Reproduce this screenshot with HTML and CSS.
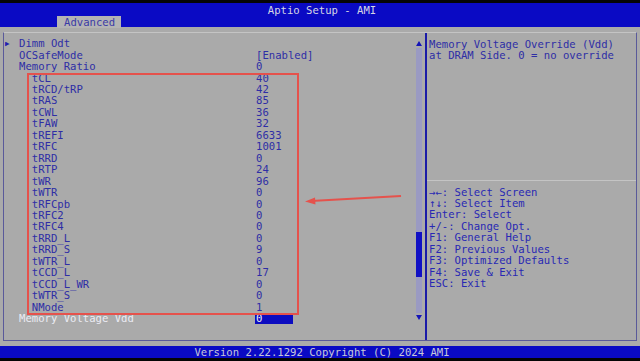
FILE: index.html
```html
<!DOCTYPE html>
<html>
<head>
<meta charset="utf-8">
<link rel="stylesheet" href="styles.css">
</head>
<body>
<div class="screen">
  <div class="blackbar"></div>
  <header class="header">
    <div class="title">Aptio Setup - AMI</div>
    <div class="tabs"><span class="tab">Advanced</span></div>
  </header>
  <main class="frame">
    <section class="left">
      <div class="list">
        <div class="row"><span class="arrow">&#9654;</span><span class="label">Dimm Odt</span><span class="value"></span></div>
        <div class="row"><span class="arrow"></span><span class="label">OCSafeMode</span><span class="value">[Enabled]</span></div>
        <div class="row"><span class="arrow"></span><span class="label">Memory Ratio</span><span class="value">0</span></div>
        <div class="row sub"><span class="arrow"></span><span class="label">tCL</span><span class="value">40</span></div>
        <div class="row sub"><span class="arrow"></span><span class="label">tRCD/tRP</span><span class="value">42</span></div>
        <div class="row sub"><span class="arrow"></span><span class="label">tRAS</span><span class="value">85</span></div>
        <div class="row sub"><span class="arrow"></span><span class="label">tCWL</span><span class="value">36</span></div>
        <div class="row sub"><span class="arrow"></span><span class="label">tFAW</span><span class="value">32</span></div>
        <div class="row sub"><span class="arrow"></span><span class="label">tREFI</span><span class="value">6633</span></div>
        <div class="row sub"><span class="arrow"></span><span class="label">tRFC</span><span class="value">1001</span></div>
        <div class="row sub"><span class="arrow"></span><span class="label">tRRD</span><span class="value">0</span></div>
        <div class="row sub"><span class="arrow"></span><span class="label">tRTP</span><span class="value">24</span></div>
        <div class="row sub"><span class="arrow"></span><span class="label">tWR</span><span class="value">96</span></div>
        <div class="row sub"><span class="arrow"></span><span class="label">tWTR</span><span class="value">0</span></div>
        <div class="row sub"><span class="arrow"></span><span class="label">tRFCpb</span><span class="value">0</span></div>
        <div class="row sub"><span class="arrow"></span><span class="label">tRFC2</span><span class="value">0</span></div>
        <div class="row sub"><span class="arrow"></span><span class="label">tRFC4</span><span class="value">0</span></div>
        <div class="row sub"><span class="arrow"></span><span class="label">tRRD_L</span><span class="value">0</span></div>
        <div class="row sub"><span class="arrow"></span><span class="label">tRRD_S</span><span class="value">9</span></div>
        <div class="row sub"><span class="arrow"></span><span class="label">tWTR_L</span><span class="value">0</span></div>
        <div class="row sub"><span class="arrow"></span><span class="label">tCCD_L</span><span class="value">17</span></div>
        <div class="row sub"><span class="arrow"></span><span class="label">tCCD_L_WR</span><span class="value">0</span></div>
        <div class="row sub"><span class="arrow"></span><span class="label">tWTR_S</span><span class="value">0</span></div>
        <div class="row sub"><span class="arrow"></span><span class="label">NMode</span><span class="value">1</span></div>
        <div class="row selected"><span class="arrow"></span><span class="label">Memory Voltage Vdd</span><span class="value"><span class="hl">0</span></span></div>
      </div>
      <div class="scrollbar">
        <span class="sb-arrow up"></span>
        <div class="track"><div class="thumb"></div></div>
        <span class="sb-arrow down"></span>
      </div>
    </section>
    <div class="divider"></div>
    <aside class="right">
      <div class="help">
        <div class="line">Memory Voltage Override (Vdd)</div>
        <div class="line">at DRAM Side. 0 = no override</div>
      </div>
      <div class="sep"></div>
      <div class="keys">
        <div class="line">&#8594;&#8592;: Select Screen</div>
        <div class="line">&#8593;&#8595;: Select Item</div>
        <div class="line">Enter: Select</div>
        <div class="line">+/-: Change Opt.</div>
        <div class="line">F1: General Help</div>
        <div class="line">F2: Previous Values</div>
        <div class="line">F3: Optimized Defaults</div>
        <div class="line">F4: Save &amp; Exit</div>
        <div class="line">ESC: Exit</div>
      </div>
    </aside>
  </main>
  <footer class="footer">Version 2.22.1292 Copyright (C) 2024 AMI</footer>
  <div class="blackbar"></div>

  <div class="annot-box"></div>
  <svg class="annot-arrow" width="104" height="20" viewBox="0 0 104 20">
    <line x1="98" y1="6" x2="8" y2="11" stroke="#e5524c" stroke-width="2"/>
    <polygon points="2,11.5 12,7.5 12.5,14.5" fill="#e5524c"/>
  </svg>
</div>
</body>
</html>
```
FILE: styles.css
```css
html, body {
  margin: 0;
  padding: 0;
  background: #000;
}
.screen {
  position: relative;
  width: 640px;
  height: 361px;
  background: #aaaaaa;
  font-family: "DejaVu Sans Mono", "Liberation Mono", monospace;
  font-size: 10.6px;
  color: #2e2ea6;
  overflow: hidden;
}
.blackbar {
  height: 3px;
  background: #050505;
}
.header {
  height: 24px;
  background: #0a0ac4;
}
.title {
  height: 13px;
  line-height: 15px;
  text-align: center;
  color: #d6d6e4;
  padding-left: 4px;
}
.tabs {
  height: 11px;
  padding-left: 57px;
}
.tab {
  display: inline-block;
  width: 57px;
  height: 12px;
  margin-top: -1px;
  line-height: 12px;
  padding-left: 7px;
  background: #b4b4b4;
  color: #3a3aa6;
}
.frame {
  display: flex;
  margin: 5px 0 0 3px;
  width: 632px;
  height: 307px;
  border: 1px solid #5a5a9a;
  border-top-color: #c4c4c4;
}
.left {
  width: 421px;
  display: flex;
}
.list {
  flex: 1;
  padding-top: 5.2px;
}
.row {
  display: grid;
  grid-template-columns: 15px 237px 1fr;
  height: 11.46px;
  line-height: 11.46px;
  white-space: pre;
}
.arrow {
  font-size: 7.5px;
  padding-left: 1px;
  color: #2020b0;
}
.sub .label {
  padding-left: 12.8px;
}
.selected .label {
  color: #ececf4;
}
.hl {
  display: inline-block;
  width: 38px;
  height: 11px;
  line-height: 11px;
  background: #0c0cc0;
  color: #f0f0f0;
  margin-left: -1px;
  padding-left: 1px;
  box-sizing: border-box;
}
.scrollbar {
  width: 6px;
  margin-right: 3px;
  padding-top: 8px;
  display: flex;
  flex-direction: column;
  align-items: center;
  gap: 2px;
}
.sb-arrow {
  width: 0;
  height: 0;
  border-left: 3px solid transparent;
  border-right: 3px solid transparent;
}
.sb-arrow.up {
  border-bottom: 5px solid #1414b8;
}
.sb-arrow.down {
  border-top: 5px solid #1414b8;
}
.track {
  width: 6px;
  height: 265px;
  background: #9a9ac2;
}
.thumb {
  margin-top: 184px;
  height: 45px;
  background: #1010c4;
}
.divider {
  width: 2px;
  background: #1a1aa8;
}
.right {
  flex: 1;
  display: flex;
  flex-direction: column;
}
.line {
  height: 11.46px;
  line-height: 11.46px;
  white-space: pre;
}
.help {
  height: 141px;
  padding: 6px 0 0 2px;
}
.sep {
  height: 1px;
  background: #c4c4c4;
}
.keys {
  padding: 5.5px 0 0 2px;
  color: #2828b4;
}
.footer {
  margin-top: 5px;
  height: 12px;
  line-height: 12px;
  background: #0a0ac4;
  color: #c8c8d8;
  text-align: center;
  padding-left: 4px;
}
.annot-box {
  position: absolute;
  left: 27px;
  top: 73px;
  width: 268px;
  height: 238px;
  border: 2px solid #e5524c;
}
.annot-arrow {
  position: absolute;
  left: 303px;
  top: 190px;
}
```
